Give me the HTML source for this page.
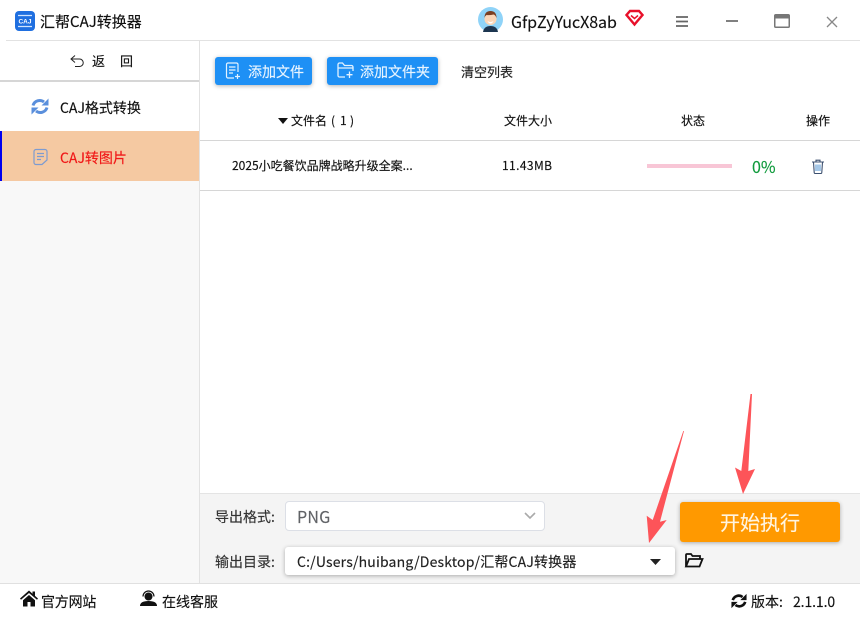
<!DOCTYPE html>
<html lang="zh-CN"><head><meta charset="utf-8"><title>汇帮CAJ转换器</title>
<style>
html,body{margin:0;padding:0;background:#fff}
#a{position:relative;width:860px;height:617px;overflow:hidden;background:#fff;font-family:"Noto Sans CJK SC","Liberation Sans",sans-serif;color:#111}
#a div,#a svg{position:absolute}
.t{white-space:nowrap;line-height:20px;height:20px;-webkit-text-stroke:.15px currentColor}
.btn{background:#1e90f5;border-radius:3px;box-shadow:0 1px 4px rgba(0,0,0,.3)}
</style></head><body><div id="a">
<!-- sidebar & panels -->
<div style="left:0;top:181px;width:199px;height:402px;background:#f8f8f8"></div>
<div style="left:199px;top:41px;width:1px;height:542px;background:#e2e2e2"></div>
<div style="left:6px;top:40px;width:854px;height:1px;background:#e2e2e2"></div>
<div style="left:0;top:80px;width:199px;height:2px;background:#d6d6d6"></div>
<div style="left:0;top:131px;width:199px;height:50px;background:#f5c9a2"></div>
<div style="left:0;top:131px;width:2px;height:50px;background:#0000f0"></div>
<div style="left:200px;top:140px;width:660px;height:1px;background:#d6d6d6"></div>
<div style="left:200px;top:190px;width:660px;height:1px;background:#d6d6d6"></div>
<div style="left:200px;top:493px;width:660px;height:90px;background:#f4f4f4;border-top:1px solid #e4e4e4;box-sizing:border-box"></div>
<div style="left:0;top:583px;width:860px;height:1px;background:#e0e0e0"></div>

<!-- title bar -->
<svg style="left:15px;top:11px" width="20" height="20" viewBox="0 0 20 20"><rect width="20" height="20" rx="4" fill="#1f6fe0"/><path d="M3 4.500h14M3 15.500h14" stroke="#cfe4ff" stroke-width="1.300"/><text x="10" y="12.500" font-size="6.500" font-weight="700" text-anchor="middle" fill="#fff" font-family="Liberation Sans">CAJ</text></svg>
<div class="t" style="left:40px;top:12px;font-size:15px">汇帮CAJ转换器</div>
<svg style="left:478px;top:7px" width="25" height="25" viewBox="0 0 25 25"><circle cx="12.500" cy="12.500" r="12.500" fill="#8fd3f8"/><path d="M5 25q1-6 7.500-6t7.500 6z" fill="#1c3550"/><circle cx="12.500" cy="12" r="6" fill="#fbd6b8"/><path d="M6.500 11q0-7 6-7t6 7q-1-3-3-3.500-4 1-7 .5-1.500 1-2 3z" fill="#7a3f22"/><path d="M9.500 14q3 2 6 0-1 2.500-3 2.500t-3-2.500z" fill="#fff"/></svg>
<div class="t" style="left:511px;top:11px;font-size:16px;letter-spacing:-.05px">GfpZyYucX8ab</div>
<svg style="left:625px;top:9px" width="19" height="18" viewBox="0 0 19 18"><path d="M5 2h9l3.500 4-8 9.500L1.500 6z" fill="none" stroke="#e8102a" stroke-width="2.400"/><path d="M6 6.500l3.500 3 3.500-3" fill="none" stroke="#e8102a" stroke-width="1.500"/></svg>
<svg style="left:675px;top:15px" width="14" height="13" viewBox="0 0 14 13"><path d="M1 2h12M1 6.500h12M1 11h12" stroke="#666" stroke-width="1.800"/></svg>
<div style="left:726px;top:20px;width:12px;height:2px;background:#808080"></div>
<svg style="left:774px;top:14px" width="16" height="14" viewBox="0 0 16 14"><rect x=".75" y=".75" width="14.500" height="12.500" rx="1" fill="#fff" stroke="#777" stroke-width="1.500"/><rect x="1" y="1" width="14" height="3.500" fill="#777"/></svg>
<svg style="left:826px;top:16px" width="12" height="12" viewBox="0 0 12 12"><path d="M1 1l10 10M11 1L1 11" stroke="#888" stroke-width="1.300"/></svg>

<!-- sidebar content -->
<svg style="left:70px;top:54px" width="15" height="14" viewBox="0 0 15 14"><path d="M5 1.500L1 5l4 3.500M1 5h8.500a3.500 3.500 0 0 1 0 7.500H5" fill="none" stroke="#222" stroke-width="1"/></svg>
<div class="t" style="left:92px;top:51px;font-size:13px">返</div>
<div class="t" style="left:120px;top:51px;font-size:13px">回</div>
<svg style="left:31px;top:97px" width="18" height="19" viewBox="0 0 18 18"><path d="M2 8a7 7 0 0 1 11-3.500M16 10a7 7 0 0 1-11 3.500" fill="none" stroke="#5a8fdc" stroke-width="3"/><path d="M17.500 1v7h-7zM.5 17v-7h7z" fill="#5a8fdc"/></svg>
<div class="t" style="left:60px;top:98px;font-size:14px">CAJ格式转换</div>
<svg style="left:33px;top:148px" width="15" height="18" viewBox="0 0 15 18"><path d="M9 16.500H3a2 2 0 0 1-2-2v-11a2 2 0 0 1 2-2h9a2 2 0 0 1 2 2v8.500zM4 5.500h7M4 8.500h7M4 11.500h4" fill="none" stroke="#7d9bd0" stroke-width="1.200"/></svg>
<div class="t" style="left:60px;top:148px;font-size:14px;color:#f01818">CAJ转图片</div>

<!-- toolbar -->
<div class="btn" style="left:215px;top:57px;width:97px;height:28px"></div>
<svg style="left:225px;top:62px" width="16" height="18" viewBox="0 0 16 18"><path d="M9 16H3a1.500 1.500 0 0 1-1.500-1.500v-12A1.500 1.500 0 0 1 3 1h8.500A1.500 1.500 0 0 1 13 2.500V10M4 5h6.500M4 8h6.500M4 11h4M12.500 12v5M10 14.500h5" fill="none" stroke="#e4f2ff" stroke-width="1.200"/></svg>
<div class="t" style="left:248px;top:62px;font-size:14px;color:#e8f4ff">添加文件</div>
<div class="btn" style="left:327px;top:57px;width:111px;height:28px"></div>
<svg style="left:337px;top:62px" width="17" height="17" viewBox="0 0 17 17"><path d="M8 15H2.500A1.500 1.500 0 0 1 1 13.500v-11A1.500 1.500 0 0 1 2.500 1h3l2 2.500h7A1.500 1.500 0 0 1 16 5v4M1 6h15M12.500 9.500v6.500M9.500 12.700h6" fill="none" stroke="#e4f2ff" stroke-width="1.300"/></svg>
<div class="t" style="left:360px;top:62px;font-size:14px;color:#e8f4ff">添加文件夹</div>
<div class="t" style="left:461px;top:62px;font-size:13px;color:#222">清空列表</div>

<!-- table -->
<svg style="left:278px;top:118px" width="10" height="6" viewBox="0 0 10 6"><path d="M0 0h10L5 6z" fill="#111"/></svg>
<div class="t" style="left:291px;top:111px;font-size:12px">文件名</div>
<div class="t" style="left:331px;top:111px;font-size:12px">(</div>
<div class="t" style="left:340px;top:111px;font-size:12px">1</div>
<div class="t" style="left:350px;top:111px;font-size:12px">)</div>
<div class="t" style="left:504px;top:111px;font-size:12px">文件大小</div>
<div class="t" style="left:681px;top:111px;font-size:12px">状态</div>
<div class="t" style="left:806px;top:111px;font-size:12px">操作</div>
<div class="t" style="left:232px;top:156px;font-size:12px">2025小吃餐饮品牌战略升级全案...</div>
<div class="t" style="left:502px;top:156px;font-size:12px;letter-spacing:.4px">11.43MB</div>
<div style="left:647px;top:164px;width:85px;height:4px;background:#f8c6d6"></div>
<div class="t" style="left:752px;top:156px;font-size:16px;color:#0f9a3c">0%</div>
<svg style="left:811px;top:159px" width="14" height="15" viewBox="0 0 14 15"><path d="M1 3h12M5 3V1.200h4V3M2.500 3l.7 10.500a1 1 0 0 0 1 1h5.600a1 1 0 0 0 1-1L11.500 3" fill="none" stroke="#3c5070" stroke-width="1.100"/><path d="M5 5.500v6.500M7 5.500v6.500M9 5.500v6.500" stroke="#5c9bd6" stroke-width="1.100"/></svg>

<!-- bottom panel -->
<div class="t" style="left:215px;top:507px;font-size:14px;color:#333">导出格式:</div>
<div style="left:285px;top:501px;width:260px;height:30px;box-sizing:border-box;background:#fff;border:1px solid #dcdfe6;border-radius:4px"></div>
<div class="t" style="left:297px;top:506px;font-size:16px;color:#606266;letter-spacing:.3px">PNG</div>
<svg style="left:524px;top:512px" width="12" height="8" viewBox="0 0 12 8"><path d="M1 1l5 5 5-5" fill="none" stroke="#aaa" stroke-width="1.600"/></svg>
<div class="t" style="left:215px;top:552px;font-size:14px;color:#333">输出目录:</div>
<div style="left:285px;top:547px;width:390px;height:28px;background:#fff;border-radius:3px;box-shadow:0 1px 4px rgba(0,0,0,.3)"></div>
<div class="t" style="left:297px;top:552px;font-size:14px;color:#222;letter-spacing:.17px">C:/Users/huibang/Desktop/汇帮CAJ转换器</div>
<svg style="left:650px;top:559px" width="11" height="6" viewBox="0 0 11 6"><path d="M0 0h11L5.500 6z" fill="#222"/></svg>
<svg style="left:684px;top:552px" width="20" height="17" viewBox="0 0 20 17"><path d="M2 14.500V3a1 1 0 0 1 1-1h4l1.500 2H16v3M2 14.500h13.500L18.500 7H5z" fill="none" stroke="#111" stroke-width="1.800"/></svg>
<div style="left:680px;top:502px;width:160px;height:40px;background:#ff9900;border-radius:3px;box-shadow:0 1px 4px rgba(0,0,0,.3)"></div>
<div class="t" style="left:720px;top:512px;font-size:20px;color:#fff4e0">开始执行</div>

<!-- arrows -->
<svg style="left:0;top:0" width="860" height="617" viewBox="0 0 860 617"><path d="M683.300 431L652.700 520L646.700 515.700L649 543L666.700 520L660 521.700L684 431z" fill="#fd5459"/><path d="M750.500 394L741.300 471L735 467.500L743 494L755 469L748.300 471L752 394z" fill="#fd5459"/></svg>

<!-- footer -->
<svg style="left:20px;top:590px" width="18" height="17" viewBox="0 0 18 16"><path d="M9 0L0 8l1 1.200L9 2.500l8 6.700L18 8l-3-2.600V1h-2.500v2.200zM3 9.800V16h4.500v-4.500h3V16H15V9.800L9 4.500z" fill="#111"/></svg>
<div class="t" style="left:41px;top:592px;font-size:14px;letter-spacing:-.2px">官方网站</div>
<svg style="left:140px;top:590px" width="17" height="16" viewBox="0 0 17 16"><path d="M3 6.500a5.500 5.500 0 0 1 11 0" fill="none" stroke="#111" stroke-width="1.200"/><circle cx="8.500" cy="6.500" r="4" fill="#111"/><path d="M0 16q0-5 8.500-5t8.500 5z" fill="#111"/></svg>
<div class="t" style="left:162px;top:592px;font-size:14px">在线客服</div>
<svg style="left:731px;top:593px" width="16" height="16" viewBox="0 0 18 18"><path d="M2 8a7 7 0 0 1 11-3.500M16 10a7 7 0 0 1-11 3.500" fill="none" stroke="#111" stroke-width="3"/><path d="M17.500 1v7h-7zM.5 17v-7h7z" fill="#111"/></svg>
<div class="t" style="left:751px;top:592px;font-size:14px">版本:</div>
<div class="t" style="left:793px;top:592px;font-size:14px;letter-spacing:-.1px">2.1.1.0</div>
</div></body></html>
